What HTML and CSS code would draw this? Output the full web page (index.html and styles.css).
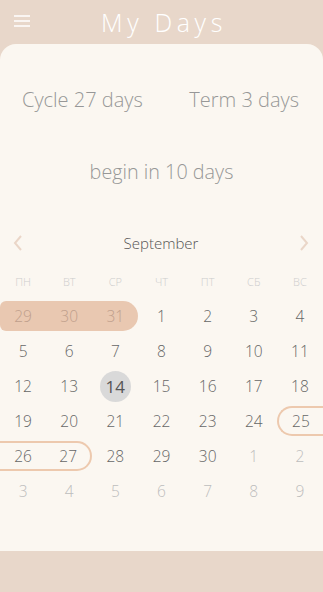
FILE: index.html
```html
<!DOCTYPE html>
<html>
<head>
<meta charset="utf-8">
<link rel="stylesheet" href="styles.css">
</head>
<body>
<header class="topbar">
  <svg class="menu" width="16" height="12" viewBox="0 0 16 12"><path d="M0 1h16M0 6h16M0 11h16" stroke="#fff" stroke-width="1.6"/></svg>
  <h1 class="title">My Days</h1>
</header>
<main class="card">
  <div class="stats">
    <span>Cycle 27 days</span>
    <span>Term 3 days</span>
  </div>
  <div class="begin">begin in 10 days</div>
  <div class="nav">
    <svg class="arrow" width="10" height="16" viewBox="0 0 10 16"><path d="M8 1L2 8l6 7" fill="none" stroke="#ead6c8" stroke-width="2"/></svg>
    <span class="month">September</span>
    <svg class="arrow" width="10" height="16" viewBox="0 0 10 16"><path d="M2 1l6 7-6 7" fill="none" stroke="#ead6c8" stroke-width="2"/></svg>
  </div>
  <div class="weekdays">
    <span>ПН</span><span>ВТ</span><span>СР</span><span>ЧТ</span><span>ПТ</span><span>СБ</span><span>ВС</span>
  </div>
  <div class="grid">
    <span class="d fill fill-start other">29</span><span class="d fill other">30</span><span class="d fill fill-end other">31</span><span class="d">1</span><span class="d">2</span><span class="d">3</span><span class="d">4</span>
    <span class="d">5</span><span class="d">6</span><span class="d">7</span><span class="d">8</span><span class="d">9</span><span class="d">10</span><span class="d">11</span>
    <span class="d">12</span><span class="d">13</span><span class="d today"><b>14</b></span><span class="d">15</span><span class="d">16</span><span class="d">17</span><span class="d">18</span>
    <span class="d">19</span><span class="d">20</span><span class="d">21</span><span class="d">22</span><span class="d">23</span><span class="d">24</span><span class="d ring ring-start">25</span>
    <span class="d ring">26</span><span class="d ring ring-end">27</span><span class="d">28</span><span class="d">29</span><span class="d">30</span><span class="d other">1</span><span class="d other">2</span>
    <span class="d other">3</span><span class="d other">4</span><span class="d other">5</span><span class="d other">6</span><span class="d other">7</span><span class="d other">8</span><span class="d other">9</span>
  </div>
</main>
</body>
</html>
```
FILE: styles.css
```css
* { box-sizing: border-box; }
html, body { margin: 0; padding: 0; }
body {
  width: 323px;
  height: 592px;
  background: #e8d7ca;
  font-family: "Open Sans", "Noto Sans", sans-serif;
  overflow: hidden;
}
.topbar {
  height: 44px;
  display: flex;
  align-items: center;
  justify-content: center;
  position: relative;
}
.menu {
  position: absolute;
  left: 14px;
  top: 15px;
}
.title {
  margin: 0;
  padding-left: 5px;
  font-weight: 300;
  font-size: 25px;
  letter-spacing: 4.6px;
  color: #fff;
  line-height: 44px;
}
.card {
  height: 507px;
  background: #fbf7f1;
  border-radius: 16px 16px 0 0;
  overflow: hidden;
}
.stats {
  display: flex;
  justify-content: space-between;
  padding: 0 24px 0 22px;
  margin-top: 44px;
  height: 24px;
  line-height: 24px;
  font-size: 20px;
  font-weight: 300;
  color: #979797;
}
.begin {
  margin-top: 48px;
  height: 24px;
  line-height: 24px;
  text-align: center;
  font-size: 19.8px;
  font-weight: 300;
  color: #979797;
}
.nav {
  margin-top: 47px;
  height: 24px;
  display: flex;
  align-items: center;
  justify-content: space-between;
  padding: 0 14px 0 13px;
}
.month {
  font-size: 15px;
  font-weight: 300;
  color: #555;
}
.weekdays {
  margin-top: 16px;
  height: 20px;
  display: grid;
  grid-template-columns: repeat(7, 1fr);
  align-items: center;
  text-align: center;
  font-size: 11px;
  font-weight: 300;
  color: #cdcdcd;
}
.grid {
  margin-top: 7.5px;
  display: grid;
  grid-template-columns: repeat(7, 1fr);
  grid-auto-rows: 35px;
  align-items: center;
}
.d {
  height: 30px;
  display: flex;
  align-items: center;
  justify-content: center;
  font-size: 15.5px;
  font-weight: 300;
  color: #666;
}
.d.other { color: #bdbdbd; }
.d.fill { background: #e9c8b1; color: #bf9f8c; }
.d.fill-start { border-radius: 6px 0 0 6px; }
.d.fill-end { border-radius: 0 15px 15px 0; }
.d.ring {
  border-top: 2px solid #edc9ae;
  border-bottom: 2px solid #edc9ae;
}
.d.ring-start {
  border-left: 2px solid #edc9ae;
  border-radius: 15px 0 0 15px;
}
.d.ring-end {
  border-right: 2px solid #edc9ae;
  border-radius: 0 15px 15px 0;
}
.d.today b {
  width: 31px;
  height: 31px;
  border-radius: 50%;
  background: #d9d9d9;
  display: flex;
  align-items: center;
  justify-content: center;
  font-weight: 400;
  font-size: 17px;
  color: #555;
}
```
